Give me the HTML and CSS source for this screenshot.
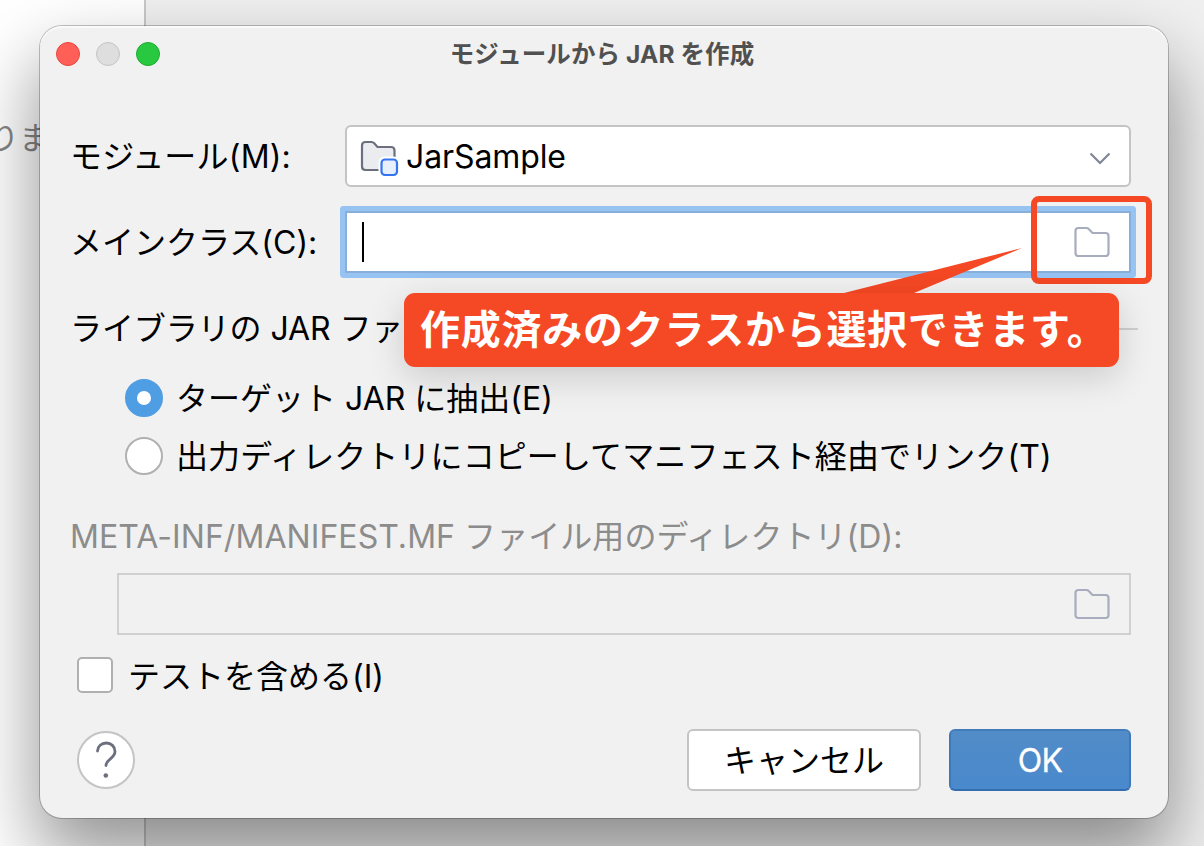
FILE: index.html
```html
<!DOCTYPE html>
<html lang="ja">
<head>
<meta charset="utf-8">
<title>モジュールから JAR を作成</title>
<link rel="stylesheet" href="styles.css">
</head>
<body>
<div class="desktop">
  <div class="side-pane"><span class="side-text">りま</span></div>
  <main class="dialog">
    <header class="titlebar">
      <div class="lights"><i class="light close"></i><i class="light minimize"></i><i class="light zoom"></i></div>
      <h1 class="title">モジュールから JAR を作成</h1>
    </header>
    <div class="row row-module">
      <label class="label">モジュール(M):</label>
      <div class="combo">
        <svg class="module-icon" width="40" height="40" viewBox="0 0 40 40" fill="none">
          <path d="M4 8.500Q4 5 7.500 5H13.500Q15 5 16.200 6.200L19.500 10H33Q36.500 10 36.500 13.500V31Q36.500 33 34 33H7.500Q4 33 4 29.500Z" fill="#ebecf0" stroke="#6c707e" stroke-width="2.200"/>
          <rect x="20.500" y="19.500" width="21" height="21" rx="6" fill="#fff"/>
          <rect x="23.500" y="22.500" width="15.500" height="15.500" rx="3.500" fill="#e7effd" stroke="#3574f0" stroke-width="2.200"/>
        </svg>
        <span class="combo-text">JarSample</span>
        <svg class="chevron" width="22" height="14" viewBox="0 0 22 14" fill="none"><path d="M1.500 1.500L11 11L20.500 1.500" stroke="#818594" stroke-width="2.200"/></svg>
      </div>
    </div>
    <div class="row row-class">
      <label class="label">メインクラス(C):</label>
      <div class="field focused">
        <i class="caret"></i>
        <svg class="folder" width="36" height="32" viewBox="0 0 36 32" fill="none"><path d="M1.500 5Q1.500 2 4.500 2H12.500Q13.800 2 14.700 3L18.500 7H31.500Q34.500 7 34.500 10V27Q34.500 30 31.500 30H4.500Q1.500 30 1.500 27Z" stroke="#a8adbd" stroke-width="2.200"/></svg>
      </div>
    </div>
    <div class="group-title"><span>ライブラリの JAR ファ</span><i class="rule"></i></div>
    <div class="radio-row"><i class="radio selected"></i><span class="radio-text">ターゲット JAR に抽出(E)</span></div>
    <div class="radio-row"><i class="radio"></i><span class="radio-text long">出力ディレクトリにコピーしてマニフェスト経由でリンク(T)</span></div>
    <div class="manifest-label">META-INF/MANIFEST.MF ファイル用のディレクトリ(D):</div>
    <div class="field disabled">
      <svg class="folder" width="36" height="32" viewBox="0 0 36 32" fill="none"><path d="M1.500 5Q1.500 2 4.500 2H12.500Q13.800 2 14.700 3L18.500 7H31.500Q34.500 7 34.500 10V27Q34.500 30 31.500 30H4.500Q1.500 30 1.500 27Z" stroke="#a8adbd" stroke-width="2.200"/></svg>
    </div>
    <div class="check-row"><i class="checkbox"></i><span class="check-text">テストを含める(I)</span></div>
    <footer class="footer">
      <div class="help"><svg width="24" height="40" viewBox="0 0 24 40" fill="none"><path d="M3.500 11C3.500 6.500 7.500 3 12.300 3C17.200 3 21 6.500 21 11.500C21 18.500 12 19 12 25.500" stroke="#6c707e" stroke-width="2.800" stroke-linecap="round"/><circle cx="11.800" cy="35.500" r="2.300" fill="#6c707e"/></svg></div>
      <button class="button cancel">キャンセル</button>
      <button class="button ok">OK</button>
    </footer>
  </main>
  <div class="highlight"></div>
  <svg class="pointer" width="200" height="60" viewBox="0 0 200 60"><path d="M22 45L200 0L92 45V57H22Z" fill="#f54824"/></svg>
  <div class="callout">作成済みのクラスから選択できます。</div>
</div>
</body>
</html>
```
FILE: styles.css
```css
* { box-sizing: border-box; }
body {
  margin: 0;
  font-family: Inter, "Noto Sans CJK JP", sans-serif;
  font-size: 32px;
  color: #000;
}
.desktop {
  position: relative;
  width: 1204px;
  height: 846px;
  padding: 26px 36px 28px 40px;
  overflow: hidden;
  background: linear-gradient(90deg, #fff 144px, #c8c8c8 144px 146px, #f0f0f0 146px);
}
.side-pane { position: absolute; left: -12px; top: 118px; }
.side-text { font-size: 31px; line-height: 40px; color: #858585; white-space: nowrap; }
.dialog {
  position: relative;
  width: 1128px;
  height: 792px;
  border-radius: 22px;
  background: #f1f1f1;
  box-shadow: 0 0 0 1px rgba(0,0,0,.23), inset 0 2px 0 #fafafa, 0 36px 72px 3px rgba(0,0,0,.42);
  white-space: nowrap;
}
.titlebar { display: grid; grid-template-columns: 120px 1fr 140px; align-items: center; height: 56px; padding-left: 16px; }
.lights { display: flex; gap: 16px; }
.light { width: 24px; height: 24px; border-radius: 50%; border: 1px solid; }
.close { background: #ff5f57; border-color: #e9463e; }
.minimize { background: #dedede; border-color: #c4c4c4; }
.zoom { background: #28c840; border-color: #1eac2c; }
.title { margin: 0; padding-bottom: 1px; text-align: center; font-size: 24.500px; line-height: 30px; font-weight: 700; letter-spacing: .1px; color: #505050; }
.row { display: grid; grid-template-columns: 275px 786px; align-items: center; padding-left: 30px; height: 62px; }
.row-module { margin-top: 43px; }
.row-class { margin-top: 24px; }
.label, .combo-text { line-height: 40px; padding-top: 2px; }
.row-module .label { letter-spacing: .2px; }
.combo {
  display: flex;
  align-items: center;
  height: 62px;
  padding: 0 18px 0 11px;
  border: 2px solid #c4c4c4;
  border-radius: 6px;
  background: #fff;
}
.module-icon { overflow: visible; margin-top: 2px; }
.combo-text { margin-left: 8px; letter-spacing: -.1px; }
.chevron { margin: 5px 0 0 auto; }
.field { display: flex; align-items: center; justify-content: flex-end; height: 62px; padding: 0 19px 0 15px; border: 2px solid #87afda; }
.focused { background: #fff; box-shadow: 0 0 0 5px #97c3f3; border-radius: 1px; }
.caret { width: 2px; height: 40px; margin-right: auto; background: #000; }
.disabled { width: 1014px; margin: 16px 0 0 77px; border-color: #d0d0d0; }
.group-title { display: flex; align-items: center; gap: 14px; height: 40px; margin: 36px 30px 0 30px; }
.group-title span { padding-bottom: 6px; letter-spacing: -.08px; }
.rule { flex: 1; height: 2px; background: #cfcfcf; }
.radio-row { display: flex; align-items: center; gap: 13px; height: 58px; margin-left: 85px; }
.group-title + .radio-row { margin-top: 20px; }
.radio { width: 38px; height: 38px; border: 2px solid #b0b0b0; border-radius: 50%; background: #fff; }
.radio-text { padding-bottom: 4px; }
.long { letter-spacing: .1px; }
.selected { border: 12.500px solid #4f9de3; }
.manifest-label { height: 40px; line-height: 40px; margin: 32px 0 0 30px; letter-spacing: .06px; color: #8c8c8c; }
.check-row { display: flex; align-items: center; gap: 15px; height: 40px; margin: 20px 0 0 37px; }
.check-text { padding-bottom: 3px; }
.checkbox { width: 36px; height: 36px; border: 2px solid #b0b0b0; border-radius: 5px; background: #fff; }
.footer { display: flex; align-items: center; height: 62px; margin: 34px 37px 0; }
.help { display: grid; place-items: center; width: 58px; height: 58px; border: 2px solid #c4c4c4; border-radius: 50%; background: #fff; }
.button { height: 62px; padding: 0; border: 2px solid #c4c4c4; border-radius: 6px; background: #fff; font: inherit; color: #000; }
.cancel { width: 234px; margin-left: auto; padding-bottom: 5px; }
.ok { width: 182px; margin-left: 28px; border-color: #437db9 #3e78b8 #346cb0; background: linear-gradient(#528cc8, #4989cc); color: #fff; letter-spacing: -.8px; -webkit-text-stroke: .3px #fff; }
.highlight { position: absolute; left: 1031px; top: 196px; width: 121px; height: 88px; border: 6px solid #f54824; border-radius: 8px; }
.callout {
  position: absolute;
  left: 404px;
  top: 293px;
  width: 715px;
  height: 74px;
  padding-left: 16px;
  border-radius: 11px;
  background: #f54824;
  box-shadow: 0 10px 36px rgba(0,0,0,.16);
  color: #fff;
  font-size: 40px;
  font-weight: 700;
  letter-spacing: .72px;
  line-height: 74px;
  white-space: nowrap;
}
.pointer { position: absolute; left: 822px; top: 248px; }
```
